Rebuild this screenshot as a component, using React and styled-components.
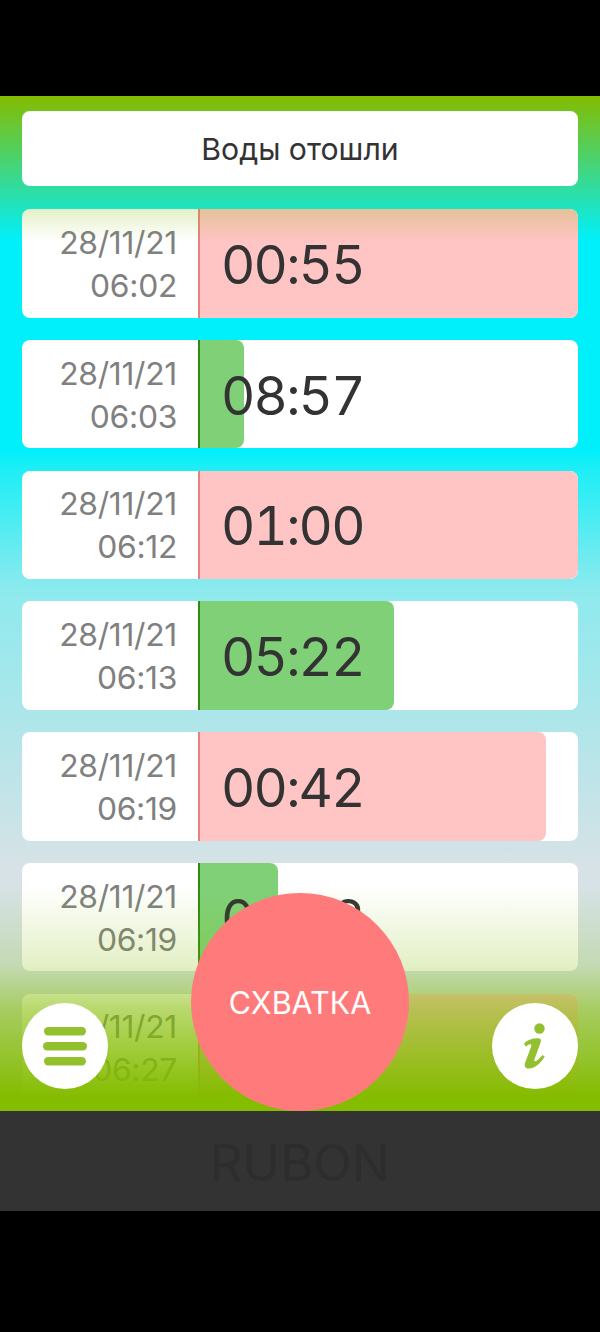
import React from "react";
import styled, { createGlobalStyle } from "styled-components";

const GlobalStyle = createGlobalStyle`
  html, body {
    margin: 0;
    background: #000;
  }
  * {
    box-sizing: border-box;
  }
`;

const GREEN = "132, 188, 0";

const Page = styled.div`
  width: 600px;
  height: 1332px;
  padding-top: 96px;
  background: #000;
  font-family: Inter, Roboto, "Noto Sans", sans-serif;
`;

const Screen = styled.main`
  position: relative;
  height: 1015px;
  padding: 15px 22px 0;
  overflow: hidden;
  background: linear-gradient(
    to bottom,
    #00f0fb 0,
    #00f0fb 355px,
    #1aeef6 370px,
    #8eeaee 495px,
    #aee6ea 625px,
    #d6e2e6 770px
  );
`;

const TopFade = styled.div`
  position: absolute;
  top: 0;
  left: 0;
  right: 0;
  height: 145px;
  background: linear-gradient(to bottom, rgb(${GREEN}), rgba(${GREEN}, 0));
  z-index: 2;
`;

const BottomFade = styled.div`
  position: absolute;
  left: 0;
  right: 0;
  bottom: 0;
  height: 225px;
  background: linear-gradient(
    to bottom,
    rgba(${GREEN}, 0) 0,
    rgba(${GREEN}, 0.22) 35%,
    rgba(${GREEN}, 0.58) 55%,
    rgb(${GREEN}) 94%
  );
  z-index: 2;
`;

const Stage = styled.div`
  position: relative;
  height: 75px;
  margin-bottom: 23px;
  padding-top: 1px;
  display: flex;
  align-items: center;
  justify-content: center;
  border-radius: 8px;
  background: #fff;
  color: #333;
  font-size: 30.2px;
  z-index: 3;
`;

const List = styled.div`
  display: flex;
  flex-direction: column;
  gap: 22.25px;
`;

const Row = styled.div`
  flex: none;
  height: 108.5px;
  display: flex;
  border-radius: 8px;
  background: #fff;
  overflow: hidden;
`;

const DateCell = styled.div`
  flex: none;
  width: 176px;
  padding: 1px 21px 0 0;
  display: flex;
  flex-direction: column;
  justify-content: center;
  text-align: right;
  color: #808080;
  font-size: 31.8px;
  letter-spacing: -0.3px;
  line-height: 43px;
`;

const TimeCell = styled.div`
  flex: 1;
  display: grid;
  grid-template: 1fr / 1fr;
`;

const Bar = styled.div`
  grid-area: 1 / 1;
  border-left: 2px solid ${(p) => (p.$kind === "pause" ? "#2e8a12" : "#ea7f7f")};
  border-radius: 0 8px 8px 0;
  background: ${(p) => (p.$kind === "pause" ? "#80d078" : "#ffc4c4")};
`;

const Duration = styled.div`
  grid-area: 1 / 1;
  align-self: center;
  padding: 4px 0 0 23px;
  color: #333;
  font-size: 53px;
  font-feature-settings: "tnum";
  letter-spacing: -1.8px;
  line-height: 1;
`;

const RoundButton = styled.button`
  position: absolute;
  bottom: 22px;
  ${(p) => (p.$side === "left" ? "left: 22px;" : "right: 22px;")}
  width: 86px;
  height: 86px;
  padding: 0;
  display: flex;
  align-items: center;
  justify-content: center;
  border: 0;
  border-radius: 50%;
  background: #fff;
  z-index: 4;
`;

const MainButton = styled.button`
  position: absolute;
  left: 191px;
  bottom: 0;
  width: 218px;
  height: 218px;
  padding: 0;
  border: 0;
  border-radius: 50%;
  background: #ff7b7b;
  color: #fff;
  font-family: inherit;
  font-size: 30.5px;
  z-index: 4;
`;

const Footer = styled.footer`
  height: 100px;
  padding-top: 2px;
  display: flex;
  align-items: center;
  justify-content: center;
  background: #333;
  color: #2d2d2d;
  font-size: 50.5px;
`;

const rows = [
  { date: "28/11/21", time: "06:02", value: "00:55", kind: "contraction", width: 380 },
  { date: "28/11/21", time: "06:03", value: "08:57", kind: "pause", width: 46 },
  { date: "28/11/21", time: "06:12", value: "01:00", kind: "contraction", width: 380 },
  { date: "28/11/21", time: "06:13", value: "05:22", kind: "pause", width: 196 },
  { date: "28/11/21", time: "06:19", value: "00:42", kind: "contraction", width: 348 },
  { date: "28/11/21", time: "06:19", value: "08:08", kind: "pause", width: 80 },
  { date: "28/11/21", time: "06:27", value: "00:50", kind: "contraction", width: 380 },
];

const MenuIcon = () => (
  <svg width="44" height="40" viewBox="0 0 44 40" fill="#93c02e">
    <rect x="1" y="1" width="42" height="8.5" rx="4.2" />
    <rect x="0" y="16" width="44" height="8.5" rx="4.2" />
    <rect x="1" y="31" width="42" height="8.5" rx="4.2" />
  </svg>
);

const InfoIcon = () => (
  <svg width="24" height="46" viewBox="0 0 24 46" fill="#93c02e">
    <circle cx="16.5" cy="5.5" r="5.2" />
    <path d="M1 20.5 C4 17 9 15 15.5 15.2 C18 15.4 18.4 17 17.6 19.5 L11.4 36.5 C10.8 38.4 12.4 38.6 14 37.4 C16 36 18 33.8 19.4 32 L21.8 33.6 C18 39.6 12.4 45.4 6 45.6 C1.8 45.7 1 43 2.2 39.6 L8.2 23.4 C8.8 21.4 7.6 20.8 6 21.4 C4.8 21.9 3.6 22.6 2.6 23.4 Z" />
  </svg>
);

const App = () => (
  <Page>
    <GlobalStyle />
    <Screen>
      <Stage>Воды отошли</Stage>
      <List>
        {rows.map((row, index) => (
          <Row key={index}>
            <DateCell>
              <span>{row.date}</span>
              <span>{row.time}</span>
            </DateCell>
            <TimeCell>
              <Bar $kind={row.kind} style={{ width: row.width }} />
              <Duration>{row.value}</Duration>
            </TimeCell>
          </Row>
        ))}
      </List>
      <TopFade />
      <BottomFade />
      <RoundButton $side="left" aria-label="Меню">
        <MenuIcon />
      </RoundButton>
      <MainButton>СХВАТКА</MainButton>
      <RoundButton $side="right" aria-label="Информация">
        <InfoIcon />
      </RoundButton>
    </Screen>
    <Footer>RUBON</Footer>
  </Page>
);

export default App;
